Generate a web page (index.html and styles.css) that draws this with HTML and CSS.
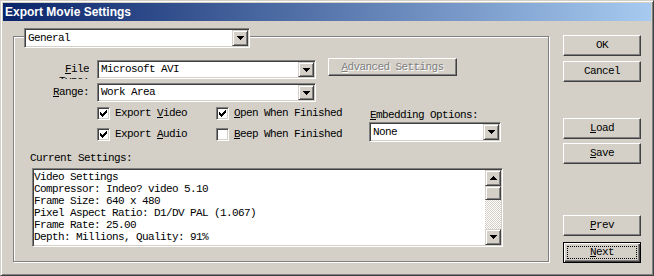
FILE: index.html
```html
<!DOCTYPE html>
<html>
<head>
	<meta http-equiv="Content-Type" content="text/html;charset=UTF-8">
	<title>Export Movie Settings</title>
	<link rel="stylesheet" href="styles.css">
</head>
<body>
	<div class="window">
		<div class="titlebar">Export Movie Settings</div>
		<div class="client">
			<!-- 左侧分组框 -->
			<div class="group">
				<div class="combo combo-general">
					<div class="combo-value">General</div>
					<div class="drop"><svg width="7" height="4" viewBox="0 0 7 4"><path d="M0 0h7v1H0zM1 1h5v1H1zM2 2h3v1H2zM3 3h1v1H3z"/></svg></div>
				</div>
				<div class="row row-file">
					<div class="label label-file"><u>F</u>ile Type:</div>
					<div class="combo combo-field">
						<div class="combo-value">Microsoft AVI</div>
						<div class="drop"><svg width="7" height="4" viewBox="0 0 7 4"><path d="M0 0h7v1H0zM1 1h5v1H1zM2 2h3v1H2zM3 3h1v1H3z"/></svg></div>
					</div>
					<button class="btn btn-adv" disabled><u>A</u>dvanced Settings</button>
				</div>
				<div class="row row-range">
					<div class="label label-range"><u>R</u>ange:</div>
					<div class="combo combo-field">
						<div class="combo-value">Work Area</div>
						<div class="drop"><svg width="7" height="4" viewBox="0 0 7 4"><path d="M0 0h7v1H0zM1 1h5v1H1zM2 2h3v1H2zM3 3h1v1H3z"/></svg></div>
					</div>
				</div>
				<div class="options">
					<div class="checks">
						<div class="check"><span class="box"><svg width="9" height="9" viewBox="0 0 9 9"><path d="M1 3h1v3H1zM2 4h1v3H2zM3 5h1v3H3zM4 4h1v3H4zM5 3h1v3H5zM6 2h1v3H6zM7 1h1v3H7z"/></svg></span><span>Export <u>V</u>ideo</span></div>
						<div class="check"><span class="box"><svg width="9" height="9" viewBox="0 0 9 9"><path d="M1 3h1v3H1zM2 4h1v3H2zM3 5h1v3H3zM4 4h1v3H4zM5 3h1v3H5zM6 2h1v3H6zM7 1h1v3H7z"/></svg></span><span><u>O</u>pen When Finished</span></div>
						<div class="check"><span class="box"><svg width="9" height="9" viewBox="0 0 9 9"><path d="M1 3h1v3H1zM2 4h1v3H2zM3 5h1v3H3zM4 4h1v3H4zM5 3h1v3H5zM6 2h1v3H6zM7 1h1v3H7z"/></svg></span><span>Export <u>A</u>udio</span></div>
						<div class="check"><span class="box"></span><span><u>B</u>eep When Finished</span></div>
					</div>
					<div class="embed">
						<div class="embed-label"><u>E</u>mbedding Options:</div>
						<div class="combo combo-embed">
							<div class="combo-value">None</div>
							<div class="drop"><svg width="7" height="4" viewBox="0 0 7 4"><path d="M0 0h7v1H0zM1 1h5v1H1zM2 2h3v1H2zM3 3h1v1H3z"/></svg></div>
						</div>
					</div>
				</div>
				<div class="caption">Current Settings:</div>
				<div class="memo">
					<div class="memo-text">
						<div>Video Settings</div>
						<div>Compressor: Indeo? video 5.10</div>
						<div>Frame Size: 640 x 480</div>
						<div>Pixel Aspect Ratio: D1/DV PAL (1.067)</div>
						<div>Frame Rate: 25.00</div>
						<div>Depth: Millions, Quality: 91%</div>
					</div>
					<div class="scrollbar">
						<div class="sb-btn"><svg width="7" height="4" viewBox="0 0 7 4"><path d="M3 0h1v1H3zM2 1h3v1H2zM1 2h5v1H1zM0 3h7v1H0z"/></svg></div>
						<div class="sb-thumb"></div>
						<div class="sb-track"></div>
						<div class="sb-btn"><svg width="7" height="4" viewBox="0 0 7 4"><path d="M0 0h7v1H0zM1 1h5v1H1zM2 2h3v1H2zM3 3h1v1H3z"/></svg></div>
					</div>
				</div>
			</div>
			<!-- 右侧按钮 -->
			<div class="buttons">
				<button class="btn btn-ok">OK</button>
				<button class="btn btn-cancel">Cancel</button>
				<button class="btn btn-load"><u>L</u>oad</button>
				<button class="btn btn-save"><u>S</u>ave</button>
				<button class="btn btn-prev"><u>P</u>rev</button>
				<button class="btn btn-next"><u>N</u>ext</button>
			</div>
		</div>
	</div>
</body>
</html>
```

FILE: styles.css
```css
*{ margin: 0; padding: 0; box-sizing: border-box; }
body{ width: 654px; height: 276px; overflow: hidden; font: 11px/12px "Liberation Mono", monospace; letter-spacing: -0.6px; color: #000; }
u{ text-decoration: underline; text-underline-offset: 1px; }

/* 窗口外框 */
.window{ width: 654px; height: 276px; background: #d4d0c8; border: 1px solid; border-color: #d4d0c8 #404040 #404040 #d4d0c8; box-shadow: inset 1px 1px #fff, inset -1px -1px #808080; padding: 2px; }
.titlebar{ height: 18px; padding-left: 2px; background: linear-gradient(to right, #0a246a, #a6caf0); color: #fff; font: bold 12px/18px "Liberation Sans", Arial, sans-serif; letter-spacing: 0; }
.client{ display: flex; align-items: flex-start; padding-left: 10px; }

/* 分组框 */
.group{ width: 536px; height: 226px; margin-top: 15px; border: 1px solid #808080; box-shadow: inset 1px 1px #fff, 1px 1px #fff; }

/* 下拉框 */
.combo{ display: flex; background: #fff; border: 1px solid; border-color: #808080 #fff #fff #808080; box-shadow: inset 1px 1px #404040, inset -1px -1px #d4d0c8; padding: 1px; }
.combo-value{ flex: 1; padding-left: 2px; white-space: nowrap; overflow: hidden; line-height: 16px; }
.drop{ width: 16px; display: flex; align-items: center; justify-content: center; background: #d4d0c8; border: 1px solid; border-color: #d4d0c8 #404040 #404040 #d4d0c8; box-shadow: inset 1px 1px #fff, inset -1px -1px #808080; }
.combo-general{ width: 226px; height: 20px; margin: -9px 0 0 10px; }
.combo-field{ width: 219px; height: 19px; }
.combo-field .combo-value{ line-height: 15px; }
.combo-embed{ width: 132px; height: 20px; margin-top: 1px; }

.row{ display: flex; align-items: flex-start; }
.label{ width: 40px; margin-left: 35px; margin-right: 8px; text-align: right; }
.row-file{ margin-top: 10px; height: 21px; }
.row-file .combo-field{ margin-top: 2px; }
.label-file{ margin-top: 5px; height: 16px; overflow: hidden; }
.row-range{ margin-top: 4px; }
.label-range{ line-height: 19px; }

/* 按钮 */
.btn{ display: block; position: relative; width: 78px; height: 21px; background: #d4d0c8; border: 1px solid; border-color: #fff #404040 #404040 #fff; box-shadow: inset -1px -1px #808080; font: inherit; letter-spacing: inherit; color: #000; line-height: 17px; text-align: center; }
.btn-adv{ width: 129px; height: 18px; margin-left: 12px; line-height: 14px; color: #808080; text-shadow: 1px 1px 0 #fff; }

/* 复选框 */
.options{ display: flex; margin-top: 5px; }
.checks{ display: grid; grid-template-columns: 119px 153px; grid-auto-rows: 13px; row-gap: 8px; margin-left: 83px; }
.check{ display: flex; align-items: center; white-space: nowrap; line-height: 13px; }
.box{ width: 13px; height: 13px; margin-right: 5px; padding: 1px; background: #fff; border: 1px solid; border-color: #808080 #fff #fff #808080; box-shadow: inset 1px 1px #404040, inset -1px -1px #d4d0c8; }
.box svg{ display: block; }
.embed-label{ margin-top: 2px; padding-left: 1px; }

.caption{ margin: 10px 0 0 16px; }

/* 文本区域 */
.memo{ display: flex; width: 471px; height: 79px; margin: 4px 0 0 18px; background: #fff; border: 1px solid; border-color: #808080 #fff #fff #808080; box-shadow: inset 1px 1px #404040, inset -1px -1px #d4d0c8; padding: 1px; }
.memo-text{ flex: 1; padding-top: 1px; overflow: hidden; white-space: nowrap; }
.scrollbar{ width: 16px; display: flex; flex-direction: column; }
.sb-btn, .sb-thumb{ display: flex; align-items: center; justify-content: center; background: #d4d0c8; border: 1px solid; border-color: #d4d0c8 #404040 #404040 #d4d0c8; box-shadow: inset 1px 1px #fff, inset -1px -1px #808080; }
.sb-btn{ height: 16px; }
.sb-thumb{ height: 14px; }
.sb-track{ flex: 1; background: repeating-conic-gradient(#d4d0c8 0 25%, #fff 0 50%) 0 0 / 2px 2px; }

/* 右侧按钮列 */
.buttons{ display: flex; flex-direction: column; margin: 14px 0 0 14px; }
.btn-cancel{ margin-top: 5px; }
.btn-load{ margin-top: 36px; }
.btn-save{ margin-top: 4px; }
.btn-prev{ margin-top: 51px; }
.btn-next{ margin-top: 6px; border-color: #000; box-shadow: inset 1px 1px #fff, inset -1px -1px #404040, inset -2px -2px #808080; }
.btn-next::after{ content: ""; position: absolute; left: 3px; top: 3px; right: 3px; bottom: 3px; border: 1px dotted #000; }
```
